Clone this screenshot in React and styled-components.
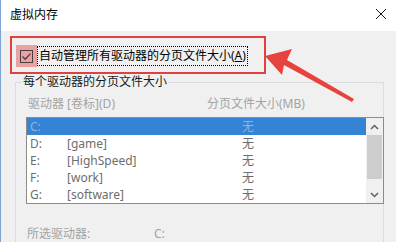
import React from "react";
import styled, { createGlobalStyle } from "styled-components";

const GlobalStyle = createGlobalStyle`
  html, body {
    margin: 0;
    padding: 0;
    background: #ffffff;
  }
  body {
    font-family: "Noto Sans", "Noto Sans CJK SC", sans-serif;
    font-size: 12px;
  }
`;

const Window = styled.div`
  position: relative;
  width: 396px;
  height: 242px;
  overflow: hidden;
  display: flex;
  flex-direction: column;
  box-sizing: border-box;
  border-left: 1px solid #7fa3d3;
  background: #f0f0f0;
`;

const TitleBar = styled.div`
  height: 30px;
  flex: none;
  display: flex;
  align-items: center;
  justify-content: space-between;
  padding: 0 9px 1px 9px;
  background: #ffffff;
  color: #000;
  font-size: 12px;
  line-height: 14px;
`;

const CloseBtn = styled.div`
  width: 12px;
  height: 12px;
  display: flex;
  margin-right: 0;
  margin-top: -2px;
`;

const Body = styled.div`
  flex: 1;
  display: flex;
  flex-direction: column;
  padding: 5px 12px 0 9px;
`;

const Callout = styled.div`
  align-self: flex-start;
  width: 248px;
  border: 2px solid #e0403f;
  padding: 7px 0 5px 4px;
  display: flex;
  align-items: center;
`;

const CheckRow = styled.label`
  display: flex;
  align-items: center;
`;

const Mark = styled.span`
  width: 21px;
  height: 22px;
  background: #eba1a2;
  display: flex;
  align-items: center;
  justify-content: center;
`;

const Box = styled.span`
  width: 11px;
  height: 11px;
  border: 1px solid #4a4040;
  display: flex;
  align-items: center;
  justify-content: center;
`;

const FocusText = styled.span`
  border: 1px dotted #000;
  padding: 2px 1px 2px 1px;
  line-height: 14px;
  color: #000;
  white-space: nowrap;
`;

const Group = styled.fieldset`
  margin: 1px 0 0 5px;
  padding: 0 0 0 10px;
  border: 1px solid #dcdcdc;
  border-bottom: none;
  flex: 1;
  min-width: 0;
`;

const Legend = styled.legend`
  margin-left: -4px;
  padding: 0 1px;
  line-height: 14px;
  color: #1a1a1a;
`;

const HeaderRow = styled.div`
  display: flex;
  margin-top: 8px;
  padding-left: 2px;
  line-height: 14px;
  color: #a3a3a3;
`;

const HeadCell = styled.span`
  width: ${(p) => p.w || "auto"};
`;

const ListBox = styled.div`
  margin-top: 6px;
  margin-right: -1px;
  height: 85px;
  border: 1px solid #8c8c8c;
  background: #fff;
  display: flex;
`;

const Rows = styled.div`
  flex: 1;
  display: flex;
  flex-direction: column;
`;

const Row = styled.div`
  height: 17px;
  display: flex;
  align-items: center;
  padding-left: 3px;
  line-height: 14px;
  background: ${(p) => (p.selected ? "#3483d5" : "transparent")};
  color: ${(p) => (p.selected ? "#8fb4dc" : "#6d6d6d")};
`;

const Cell = styled.span`
  width: ${(p) => p.w};
  flex: none;
`;

const ScrollBar = styled.div`
  width: 17px;
  display: flex;
  flex-direction: column;
  background: #f0f0f0;
`;

const ArrowBtn = styled.div`
  height: 17px;
  display: flex;
  align-items: center;
  justify-content: center;
`;

const Thumb = styled.div`
  height: 44px;
  margin: 0 1px;
  background: #cdcdcd;
`;

const Track = styled.div`
  flex: 1;
`;

const Footer = styled.div`
  display: flex;
  margin-top: 23px;
  padding-left: 1px;
  line-height: 14px;
  color: #a3a3a3;
`;

const Overlay = styled.svg`
  position: absolute;
  left: 0;
  top: 0;
  pointer-events: none;
`;

const drives = [
  ["C:", "", "无"],
  ["D:", "[game]", "无"],
  ["E:", "[HighSpeed]", "无"],
  ["F:", "[work]", "无"],
  ["G:", "[software]", "无"],
];

export default function App() {
  return (
    <>
      <GlobalStyle />
      <Window>
        <TitleBar>
          <span>虚拟内存</span>
          <CloseBtn>
            <svg width="12" height="12" viewBox="0 0 12 12">
              <path d="M1 1 L11 11 M11 1 L1 11" stroke="#111" strokeWidth="1" />
            </svg>
          </CloseBtn>
        </TitleBar>
        <Body>
          <Callout>
            <CheckRow>
              <Mark>
                <Box>
                  <svg width="11" height="11" viewBox="0 0 11 11">
                    <path d="M1.5 5.5 L4.2 8.2 L9.5 2.6" fill="none" stroke="#4a4040" strokeWidth="1.3" />
                  </svg>
                </Box>
              </Mark>
              <FocusText>
                自动管理所有驱动器的分页文件大小(<u>A</u>)
              </FocusText>
            </CheckRow>
          </Callout>
          <Group>
            <Legend>每个驱动器的分页文件大小</Legend>
            <HeaderRow>
              <HeadCell w="179px">驱动器 [卷标](D)</HeadCell>
              <HeadCell>分页文件大小(MB)</HeadCell>
            </HeaderRow>
            <ListBox>
              <Rows>
                {drives.map(([d, label, size], i) => (
                  <Row key={d} selected={i === 0}>
                    <Cell w="37px">{d}</Cell>
                    <Cell w="175px">{label}</Cell>
                    <Cell w="30px">{size}</Cell>
                  </Row>
                ))}
              </Rows>
              <ScrollBar>
                <ArrowBtn>
                  <svg width="9" height="6" viewBox="0 0 9 6">
                    <path d="M1 5 L4.5 1.5 L8 5" fill="none" stroke="#606060" strokeWidth="1.5" />
                  </svg>
                </ArrowBtn>
                <Thumb />
                <Track />
                <ArrowBtn>
                  <svg width="9" height="6" viewBox="0 0 9 6">
                    <path d="M1 1 L4.5 4.5 L8 1" fill="none" stroke="#606060" strokeWidth="1.5" />
                  </svg>
                </ArrowBtn>
              </ScrollBar>
            </ListBox>
            <Footer>
              <HeadCell w="127px">所选驱动器:</HeadCell>
              <span>C:</span>
            </Footer>
          </Group>
        </Body>
        <Overlay width="396" height="242" viewBox="0 0 396 242">
          <polygon
            points="264,56 291,49 286,60 353,99 351,102 283,65 281,75"
            fill="#e8423f"
          />
        </Overlay>
      </Window>
    </>
  );
}
